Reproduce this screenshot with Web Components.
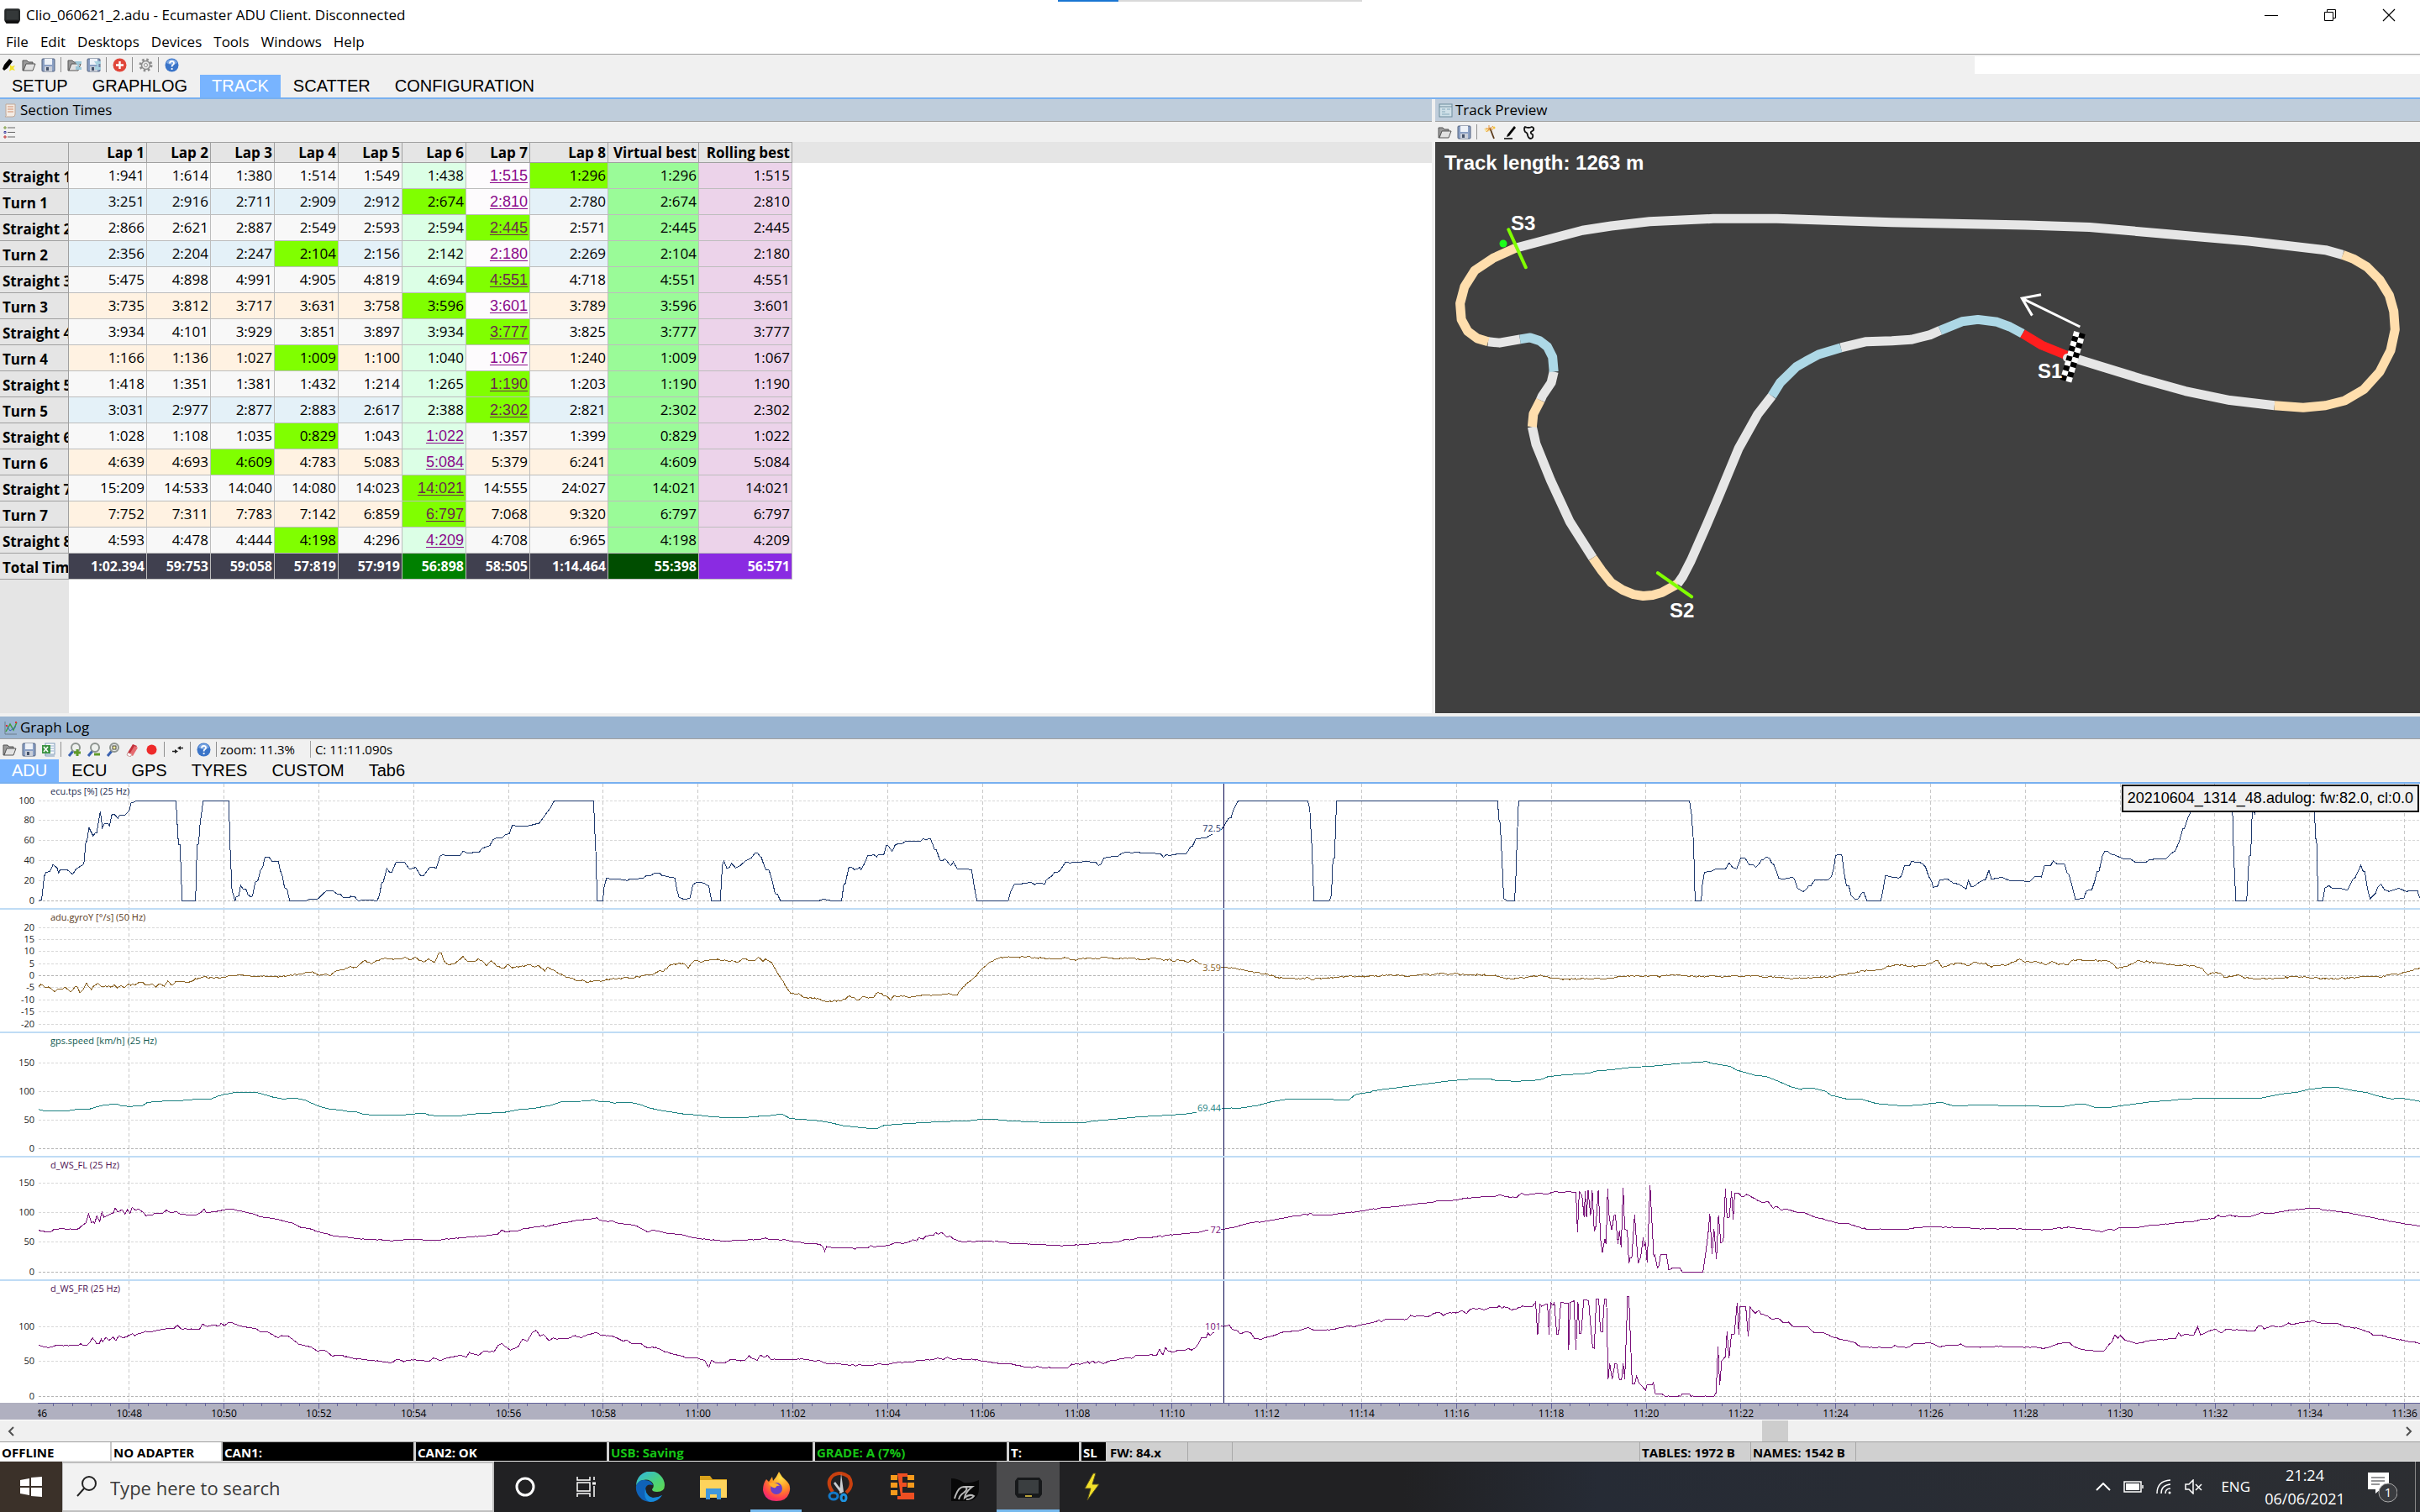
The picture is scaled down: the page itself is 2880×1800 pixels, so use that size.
<!DOCTYPE html>
<html lang="en">
<head>
<meta charset="utf-8">
<title>Clio_060621_2.adu - Ecumaster ADU Client. Disconnected</title>
<style>
    html, body {
        margin: 0;
        height: 100%;
        background: #f0f0f0;
    }
    body {
        --ui: "Open Sans", "Noto Sans", sans-serif;
        --alt: "Liberation Sans", Arial, sans-serif;
        font: 16px/20px var(--ui);
        color: #000;
        overflow: hidden;
    }
</style>
</head>
<body>
<adu-client></adu-client>

<script>
const FOLDER = '<path d="M1 3h5l2 2h5v3H5l-3 7H1z" fill="#9a9a9a" stroke="#555"/><path d="M5 7h11l-3 8H2z" fill="#e2e2e2" stroke="#555"/>';
const FLOPPY = '<rect x="1" y="1" width="15" height="15" rx="1" fill="#8ba0c4" stroke="#52627f"/><rect x="4" y="1" width="9" height="7" fill="#eef2f8"/><rect x="4" y="10" width="9" height="6" fill="#c9ced8"/><rect x="6" y="11" width="3" height="4" fill="#46536b"/>';
const LENS = '<path d="M7 10l-5 6" stroke="#3a62b0" stroke-width="3"/><circle cx="10" cy="6" r="5" fill="#eef1ee" stroke="#8d9490" stroke-width="2"/>';

const ICONS = {
    app: '<rect x="1" y="2" width="16" height="13" rx="2" fill="#26292a"/><path d="M1 14l2 3h12l2-3z" fill="#111"/><rect x="3" y="4" width="12" height="9" fill="#343839"/>',
    plug: '<path d="M8 1l4 3-6 8-4 3-2-2 2-5z" fill="#000"/><path d="M9 8l2 2 4-1-2 3 2 3-4-1-3 2 1-4z" fill="#f2e22c"/>',
    open: FOLDER,
    save: FLOPPY,
    openLink: FOLDER + '<path d="M9 4h8v3h-3v4h3v3h-7v-4h3z" fill="#9cc7d8"/>',
    saveLink: FLOPPY + '<path d="M9 4h8v3h-3v4h3v3h-7v-4h3z" fill="#a9d2e0"/>',
    add: '<circle cx="8.500" cy="8.500" r="8" fill="#e0463a"/><path d="M8.500 4v9M4 8.500h9" stroke="#fff" stroke-width="2.400"/>',
    gear: '<circle cx="8.500" cy="8.500" r="6.500" fill="none" stroke="#8c8c8c" stroke-width="3" stroke-dasharray="2.500 2.600"/><circle cx="8.500" cy="8.500" r="5" fill="#e8e8e8" stroke="#8c8c8c" stroke-width="1.500"/><circle cx="8.500" cy="8.500" r="2" fill="#f6f6f6" stroke="#8c8c8c"/>',
    help: '<circle cx="8.500" cy="8.500" r="8" fill="#3a74c8"/><path d="M2 6a7 7 0 0 1 13 0q-6 4-13 0" fill="#7ba6e2"/><path d="M6 6.500q0-2.500 2.600-2.500T11 6.300q0 1.300-1.300 2T8.600 10.500M8.600 12v2" fill="none" stroke="#fff" stroke-width="1.800"/>',
    excel: '<rect x="5" y="1" width="11" height="13" fill="#fff" stroke="#7a98b8"/><path d="M8 4h7M8 7h7M8 10h7" stroke="#8aa9cc"/><rect x="1" y="3" width="10" height="10" fill="#3d9444"/><path d="M3 5l5 6M8 5l-5 6" stroke="#fff" stroke-width="1.500"/><path d="M5 14v2h11" stroke="#7a98b8" fill="none"/>',
    zoomIn: LENS + '<path d="M12 8v8M8 12h8" stroke="#5f9a28" stroke-width="3"/>',
    zoomOut: LENS + '<path d="M9 14h7" stroke="#5f9a28" stroke-width="3"/>',
    zoomFit: LENS + '<rect x="8" y="4" width="4" height="4" fill="#f6ef9a" stroke="#444"/>',
    eraser: '<path d="M9 2l5 2-6 10-5-2z" fill="#c2303a"/><path d="M11 4l4 2-6 10-4-2z" fill="#e66b70"/><path d="M3 12l5 2-2 3-4-2z" fill="#fff" stroke="#c99"/>',
    record: '<circle cx="8.500" cy="8.500" r="6" fill="#ee2a2a"/>',
    snap: '<path d="M2 10.500h4M11 6.500h4" stroke="#222" stroke-width="1.500"/><path d="M5 8l4 2.500L5 13zM12 4v5L8 6.500z" fill="#222"/>',
    list: '<path d="M6 3h9M6 8.500h9M6 14h9" stroke="#666"/><path d="M2 2h2v2H2z" fill="none" stroke="#7a9a3a"/><path d="M2 7.500h2v2H2z" fill="none" stroke="#3c3c9c"/><path d="M2 13h2v2H2z" fill="none" stroke="#c03030"/>',
    report: '<path d="M3 1h11v12q0 3-3 3H2q2-1 1-4z" fill="#f4ece4" stroke="#c0a898"/><path d="M5 4h7M5 7h7M5 10h7" stroke="#d08a6a"/>',
    pane: '<rect x="1" y="1" width="15" height="15" fill="#cfe0e8" stroke="#6d8b9c"/><path d="M1 4h15" stroke="#6d8b9c"/><path d="M4 7h4M4 10h4M10 7h4M4 13h9" stroke="#86a9bb"/>',
    chart: '<path d="M2 1v15h14" stroke="#6c7c8c" fill="none"/><path d="M3 13l5-9 4 7 4-9" stroke="#3f9c3f" fill="none" stroke-width="1.500"/><path d="M3 5l5 7 7-5" stroke="#3a62c0" fill="none"/><path d="M3 5h2v2H3zM14 1h2v2h-2z" fill="#d33"/>',
    wand: '<path d="M1 4l7-1 1 4-6 1z" fill="#f6e3a0"/><path d="M8 3l5 13" stroke="#5a3a1a" stroke-width="1.800"/><path d="M7 0v6M3 4l9 1M12 1L4 8" stroke="#e8953c"/><circle cx="13" cy="3" r="1.500" fill="#f2c23c"/>',
    pen: '<path d="M14 1l2 2-8 10-3 1 1-3z" fill="#000"/><path d="M2 16h10" stroke="#000" stroke-width="1.500"/>',
    circuit: '<path d="M4 2q4 2 8 0 3 1 2 4l-3 2q-1 2 2 3 1 4-2 5-3 0-4-4 0-3-3-4-2-4 0-6z" fill="none" stroke="#111" stroke-width="1.800" stroke-linejoin="round"/>'
};

// Adds an open shadow root holding the given styles and markup.
function paint(el, css, html) {
    el.attachShadow({ mode: 'open' }).innerHTML = `<style>${css}</style>${html}`;
    return el.shadowRoot;
}

class UiIcon extends HTMLElement {
    connectedCallback() {
        paint(this, `
            :host { display: inline-block; width: 17px; height: 17px; flex: none; }
            svg { display: block; width: 100%; height: 100%; }
        `, `<svg viewBox="0 0 17 17" aria-hidden="true">${ICONS[this.getAttribute('name')] || ''}</svg>`);
    }
}
customElements.define('ui-icon', UiIcon);

class TitleBar extends HTMLElement {
    connectedCallback() {
        paint(this, `
            :host { display: flex; align-items: center; height: 36px; background: #fff; font-size: 17px; position: relative; }
            ui-icon { width: 26px; height: 20px; margin: 0 4px 0 1px; }
            .text { flex: 1; }
            .grip { position: absolute; top: 0; left: 50%; transform: translateX(-50%); width: 362px; height: 2px; background: linear-gradient(90deg, #1976d2 72px, #d9d9d9 72px); }
            button { width: 70px; height: 34px; border: 0; padding: 0; background: none; display: grid; place-items: center; }
            button:last-child { margin-right: 2px; }
        `, `
            <span class="grip"></span>
            <ui-icon name="app"></ui-icon>
            <span class="text"><slot></slot></span>
            <button aria-label="Minimize"><svg width="16" height="16"><path d="M0 8.500h16" stroke="#000"/></svg></button>
            <button aria-label="Restore"><svg width="16" height="16" fill="none" stroke="#000"><path d="M1.500 4.500h10v10h-10zM4.500 4v-2.500h10v10H12"/></svg></button>
            <button aria-label="Close"><svg width="16" height="16"><path d="M1 1l14 14M15 1L1 15" stroke="#000" stroke-width="1.200"/></svg></button>
        `);
    }
}
customElements.define('title-bar', TitleBar);

class MenuBar extends HTMLElement {
    connectedCallback() {
        const items = this.getAttribute('items').split(',');
        paint(this, `
            :host { display: flex; height: 28px; background: #fff; }
            button { border: 0; background: none; font: 17px/28px var(--ui); padding: 0 7px; color: #000; }
        `, items.map(t => `<button>${t}</button>`).join(''));
    }
}
customElements.define('menu-bar', MenuBar);

// Icons are a comma list, "|" draws a separator. Slotted text follows them.
class ToolBar extends HTMLElement {
    connectedCallback() {
        const icons = this.getAttribute('icons').split(',');
        paint(this, `
            :host { display: flex; align-items: center; height: 24px; background: #f0f0f0; }
            button { width: 23px; height: 22px; border: 0; padding: 0; background: none; display: grid; place-items: center; }
            i { width: 1px; height: 18px; margin: 0 4px 0 3px; background: #8f8f8f; }
        `, icons.map(n => n === '|' ? '<i></i>' : `<button aria-label="${n}"><ui-icon name="${n}"></ui-icon></button>`).join('') + '<slot></slot>');
    }
}
customElements.define('tool-bar', ToolBar);

class TabStrip extends HTMLElement {
    connectedCallback() {
        const active = this.getAttribute('active');
        const tabs = this.getAttribute('tabs').split(',');
        paint(this, `
            :host { display: flex; gap: 1px; height: 27px; border-bottom: 2px solid #78b0f0; background: #f0f0f0; }
            button { border: 0; background: none; font: 20px/24px var(--alt); padding: 0 14px 2px; color: #000; }
            button[aria-selected=true] { background: #78b4ff; color: #fff; }
        `, tabs.map(t => `<button role="tab" aria-selected="${t === active}">${t}</button>`).join(''));
    }
}
customElements.define('tab-strip', TabStrip);

class DockPanel extends HTMLElement {
    connectedCallback() {
        paint(this, `
            :host { display: flex; flex-direction: column; min-width: 0; min-height: 0; }
            header { display: flex; align-items: center; gap: 3px; height: 26px; padding-left: 4px; background: var(--caption, #bfcddb); border-bottom: 1px solid #a0a0a0; font-size: 17px; }
        `, `
            <header><ui-icon name="${this.getAttribute('icon')}"></ui-icon><span>${this.getAttribute('caption')}</span></header>
            <slot></slot>
        `);
    }
}
customElements.define('dock-panel', DockPanel);

// "*" marks the best time of a section, "_" the laps the rolling best is made of.
const SECTIONS = [
    ['Straight 1', 's', '1:941 1:614 1:380 1:514 1:549 1:438 1:515_ 1:296* 1:296 1:515'],
    ['Turn 1', 'b', '3:251 2:916 2:711 2:909 2:912 2:674* 2:810_ 2:780 2:674 2:810'],
    ['Straight 2', 's', '2:866 2:621 2:887 2:549 2:593 2:594 2:445*_ 2:571 2:445 2:445'],
    ['Turn 2', 'b', '2:356 2:204 2:247 2:104* 2:156 2:142 2:180_ 2:269 2:104 2:180'],
    ['Straight 3', 's', '5:475 4:898 4:991 4:905 4:819 4:694 4:551*_ 4:718 4:551 4:551'],
    ['Turn 3', 'p', '3:735 3:812 3:717 3:631 3:758 3:596* 3:601_ 3:789 3:596 3:601'],
    ['Straight 4', 's', '3:934 4:101 3:929 3:851 3:897 3:934 3:777*_ 3:825 3:777 3:777'],
    ['Turn 4', 'p', '1:166 1:136 1:027 1:009* 1:100 1:040 1:067_ 1:240 1:009 1:067'],
    ['Straight 5', 's', '1:418 1:351 1:381 1:432 1:214 1:265 1:190*_ 1:203 1:190 1:190'],
    ['Turn 5', 'b', '3:031 2:977 2:877 2:883 2:617 2:388 2:302*_ 2:821 2:302 2:302'],
    ['Straight 6', 's', '1:028 1:108 1:035 0:829* 1:043 1:022_ 1:357 1:399 0:829 1:022'],
    ['Turn 6', 'p', '4:639 4:693 4:609* 4:783 5:083 5:084_ 5:379 6:241 4:609 5:084'],
    ['Straight 7', 's', '15:209 14:533 14:040 14:080 14:023 14:021*_ 14:555 24:027 14:021 14:021'],
    ['Turn 7', 'p', '7:752 7:311 7:783 7:142 6:859 6:797*_ 7:068 9:320 6:797 6:797'],
    ['Straight 8', 's', '4:593 4:478 4:444 4:198* 4:296 4:209_ 4:708 6:965 4:198 4:209'],
    ['Total Time', 'total', '1:02.394 59:753 59:058 57:819 57:919 56:898 58:505 1:14.464 55:398 56:571']
];
const COLUMNS = ['', 'Lap 1', 'Lap 2', 'Lap 3', 'Lap 4', 'Lap 5', 'Lap 6', 'Lap 7', 'Lap 8', 'Virtual best', 'Rolling best', ''];
const WIDTHS = [82, 93, 76, 76, 76, 76, 76, 76, 93, 108, 111];

class LapTable extends HTMLElement {
    connectedCallback() {
        const cell = (t, i) => {
            const cls = ['c' + (i + 1)];
            if (t.includes('*')) cls.push('best');
            if (t.includes('_')) cls.push('roll');
            return `<td class="${cls.join(' ')}">${t.replace(/[*_]/g, '')}</td>`;
        };
        paint(this, `
            :host { display: block; flex: 1; overflow: hidden; background: linear-gradient(90deg, #e5e5e5 82px, #fff 82px); }
            table { width: 100%; table-layout: fixed; border-collapse: separate; border-spacing: 0; font-size: 17px; line-height: 22px; }
            th, td { box-sizing: border-box; padding: 0 2px; text-align: right; white-space: nowrap; overflow: hidden; border-right: 1px solid #bdbdbd; border-bottom: 1px solid #bdbdbd; }
            thead th { height: 25px; padding: 0 2px; background: #e5e5e5; border-color: #a0a0a0; border-top: 1px solid #a0a0a0; }
            tbody th { height: 31px; background: #e5e5e5; text-align: left; padding: 3px 0 0 3px; border-color: #a0a0a0; }
            thead th:last-child, tbody td:last-child { border: 0; }
            .s td { background: #f8f8f8; }
            .b td { background: #e4f1f8; }
            .p td { background: #fff2e2; }
            td.c6 { background: #dcffe6; }
            td.c9 { background: #9afb98; }
            td.c10 { background: #ecd3ea; }
            td.roll { color: #8b0a8b; background: #fdfbfd; font: 18px/20px var(--alt); text-decoration: underline; text-underline-offset: 2px; }
            td.roll.c6 { background: #dcffe6; }
            td.best { background: #80ff00 !important; }
            td.best.roll { color: #6b2a4b; }
            .total td { background: #40404f; color: #fff; font-weight: 700; font-size: 16px; }
            .total td.c6 { background: #008000; }
            .total td.c9 { background: #004d00; }
            .total td.c10 { background: #8a2be2; }
            tbody tr td:last-child { background: #fff; }
        `, `
            <table>
                <colgroup>${WIDTHS.map(w => `<col style="width:${w}px">`).join('')}<col></colgroup>
                <thead><tr>${COLUMNS.map(c => `<th scope="col">${c}</th>`).join('')}</tr></thead>
                <tbody>${SECTIONS.map(([name, kind, times]) => `<tr class="${kind}"><th scope="row">${name}</th>${times.split(' ').map(cell).join('')}<td></td></tr>`).join('')}</tbody>
            </table>
        `);
    }
}
customElements.define('lap-table', LapTable);

const TRACK = [
    ['#e6e6e6', '1020,658 1070,683 1130,712 1200,743 1270,766 1340,779'],
    ['#e6e6e6', '1447,404 1420,392 1300,370 1170,352 1050,335 950,330 740,323 640,318 560,314 460,314 360,321 300,332 255,343 150,387'],
    ['#ffdead', '1340,779 1385,784 1420,779 1450,767 1480,739 1505,695 1522,642 1529,590 1527,545 1520,505 1505,466 1485,434 1465,415 1447,404'],
    ['#e6e6e6', '107,620 125,623 157,614'],
    ['#ffdead', '150,387 115,412 86,443 70,483 63,525 65,565 75,594 90,612 107,620'],
    ['#e6e6e6', '210,695 206,722 192,755 189,766'],
    ['#add8e6', '157,614 173,610 188,618 200,633 208,658 210,695'],
    ['#e6e6e6', '176,832 182,875 205,965 235,1068 271,1158'],
    ['#ffdead', '189,766 178,800 176,832'],
    ['#e6e6e6', '404,1223 412,1205 425,1165 450,1075 470,1000 500,885 530,800 552,755'],
    ['#ffdead', '271,1158 285,1190 300,1220 318,1238 335,1249 350,1253 365,1251 380,1244 404,1223'],
    ['#e6e6e6', '660,635 700,620 740,618 770,615 800,603 816,592'],
    ['#add8e6', '552,755 565,722 590,683 605,669 625,652 660,635'],
    ['#add8e6', '816,592 850,570 875,565 905,571 925,583 945,600'],
    ['#ff1e1e', '945,600 975,629 1014,654']
];

class TrackMap extends HTMLElement {
    connectedCallback() {
        let flag = '';
        for (let r = 0; r < 10; r++) {
            for (let c = 0; c < 2; c++) {
                flag += `<rect x="${c * 7 - 7}" y="${r * 6}" width="7" height="6" fill="${(r + c) % 2 ? '#000' : '#fff'}"/>`;
            }
        }
        paint(this, `
            :host { display: block; flex: 1; min-height: 0; background: #404040; }
            svg { display: block; width: 100%; height: 100%; }
            polyline, path { fill: none; vector-effect: non-scaling-stroke; }
            .road { stroke-width: 11px; stroke-linejoin: round; }
            .gate { stroke: #80ff00; stroke-width: 4px; stroke-linecap: round; }
            .dir { stroke: #fff; stroke-width: 3px; }
            text { font: bold 24px var(--alt); fill: #fff; }
        `, `
            <svg viewBox="0 0 1172 680" preserveAspectRatio="xMinYMin meet" role="img" aria-label="Track preview">
                <g transform="scale(.759 .4783) translate(-24 -123)">
                    ${TRACK.map(([c, p]) => `<polyline class="road" stroke="${c}" points="${p}"/>`).join('')}
                    <path class="gate" d="M139 341L166 435M373 1196L426 1255"/>
                    <path class="dir" d="M1035 583L944 512M974 503L944 512L960 555"/>
                </g>
                <circle cx="81" cy="121" r="4.500" fill="#1bff1b"/>
                <circle cx="752" cy="257" r="5" fill="#e6e6e6"/>
                <g transform="translate(767 227) rotate(16)">${flag}</g>
                <text x="11" y="33">Track length: 1263 m</text>
                <text x="90" y="105">S3</text>
                <text x="717" y="281">S1</text>
                <text x="279" y="566">S2</text>
            </svg>
        `);
    }
}
customElements.define('track-map', TrackMap);

// Each trace is a list of logged blocks: [x origin, y origin, x pitch, samples].
// Samples are "x,y" pairs, three y units to a pixel; "/" is a gap in the line.
const W1 = 0.61224, W2 = 0.39541, W3 = 0.48469, W4 = 0.53571;
const CHANNELS = [
    {
        name: 'ecu.tps [%] (25 Hz)', ink: '#1a2a4e', color: '#1f3a6e', height: 150, noise: 0,
        ticks: [[100, 20], [80, 43], [60, 67], [40, 91], [20, 115], [0, 139]], value: '72.5', valueY: 53,
        blocks: [
            [0, -93, W1, '75,697 81,694 86,610 89,597 97,592 103,568 111,580 114,598 117,586 130,586 141,602 149,582 163,566 167,486 169,484 173,436 181,465 185,455 188,455 195,378 199,437 203,422 210,421 213,429 217,391 222,387 229,403 232,393 244,390 251,375 255,348 265,341 342,341 347,495 350,497 354,697 380,697 383,497 386,495 389,420 395,341 445,341 447,495 451,660 457,697 459,683 464,680 468,641 472,655 478,656 482,675 488,684 491,680 496,630 501,626 506,590 511,575 515,541 523,541 529,556 541,556 545,590 549,610 553,650 558,655 563,697 595,697 600,692 618,690 630,668 636,661 648,662 656,674 662,674 667,686 679,686 682,681 690,683 696,697 712,694 733,697 737,680 742,633 745,630 752,582 758,597 762,594 770,559 787,561 796,584 808,578 818,608 824,606 836,576 848,580 851,565 855,538 861,532 866,536 895,534 900,519 907,526 931,524 937,510 952,500 958,480 966,472 976,472 982,462 990,457 996,427 1004,430 1026,430 1048,420 1060,390 1070,365 1077,341 1154,341 1156,440 1158,520 1161,697 1172,697 1174,650 1179,617 1190,619 1215,622 1219,626 1223,620 1249,617 1256,608 1265,607 1272,599 1282,598 1286,606 1300,612 1312,616 1316,660 1320,685 1330,692 1341,688 1347,640 1354,630 1368,634 1378,645 1383,697 1400,697 1402,640 1404,570 1407,554 1413,581 1418,578 1422,564 1430,580 1440,570 1448,556 1460,545 1468,526 1473,527 1478,540 1480,542 1484,565 1489,587 1495,588 1500,620 1507,672 1511,673 1517,697 1568,697'],
            [960, -13, W1, '0,457 24,457 30,453 36,452 40,454 48,457 68,457 72,400 75,396 82,338 88,338 93,346 98,344 103,338 106,346 112,325 119,295 126,296 129,291 136,300 140,292 150,292 155,259 159,261 166,281 172,258 178,253 186,253 192,244 222,244 226,235 232,240 237,236 241,236 249,275 252,275 259,312 265,313 269,307 280,332 285,319 293,343 312,343 321,348 325,400 331,457 392,457 396,427 404,397 418,397 422,393 428,395 432,391 438,393 443,400 448,394 463,397 466,382 472,374 476,370 481,357 488,355 493,348 503,319 512,322 522,319 532,320 538,317 562,319 567,331 571,329 577,306 585,301 605,298 614,286 624,283 630,286 640,284 655,286 688,289 693,301 700,292 706,297 712,292 738,288 747,263 750,262 757,235 775,233 786,222 788,220 / 806,203 811,190 820,163 825,160 830,130 839,100 974,100 978,130 980,200 981,220 986,457 1016,457 1020,437 1023,307 1026,305 1030,100 1343,100 1346,170 1348,180 1352,320 1355,450 1358,452 1361,457 1376,457 1378,400 1381,230 1384,100 1568,100'],
            [1920, -13, W1, '0,100 148,100 152,150 156,250 159,457 171,457 173,400 177,355 190,352 199,344 218,343 225,322 232,338 240,343 248,304 256,304 264,328 271,328 277,337 283,326 288,311 292,310 297,301 303,304 308,323 312,328 322,377 330,380 348,373 352,379 358,412 369,425 376,414 380,403 384,403 392,382 418,382 424,370 428,345 432,297 436,292 444,293 449,360 453,402 458,404 462,438 470,452 476,450 484,427 487,428 493,457 520,457 524,420 529,367 543,373 555,376 560,368 566,332 576,331 579,317 596,320 602,326 607,337 613,370 618,385 622,409 630,406 635,382 650,380 660,393 672,398 680,408 686,415 690,385 696,407 702,404 712,390 724,380 730,348 735,380 755,373 770,385 810,388 820,370 832,372 838,332 850,332 855,314 862,325 877,325 882,358 886,364 891,400 898,451 914,449 920,421 930,418 936,385 940,354 944,351 951,295 955,280 962,281 966,290 975,294 990,306 1006,308 1014,319 1036,319 1042,310 1075,306 1084,288 1092,280 1100,245 1107,200 1110,198 1117,160 1122,140 1130,110 1140,100 1203,100 1206,300 1210,457 1231,457 1236,297 1239,294 1242,130 1247,146 1250,110 1258,100 1358,100 1363,140 1365,235 1367,239 1370,457 1379,457 1383,412 1391,403 1398,414 1412,412 1427,419 1438,379 1442,374 1453,331 1457,350 1461,354 1465,405 1471,451 1476,440 1482,430 1486,408 1492,397 1499,418 1508,424 1527,412 1542,425 1548,420 1563,420 1567,446']
        ]
    },
    {
        name: 'adu.gyroY [°/s] (50 Hz)', ink: '#5a3a1a', color: '#8b6426', height: 147, noise: 1,
        ticks: [[20, 21], [15, 35], [10, 49], [5, 64], [0, 78], [-5, 92], [-10, 107], [-15, 121], [-20, 136]], value: '3.59', valueY: 69,
        blocks: [
            [0, -243, W1, '75,1005 79,996 84,1000 88,1008 94,1005 99,1010 107,1022 112,1013 122,1011 126,1005 132,1014 137,1022 146,1003 150,1003 155,1025 162,1013 168,990 172,1003 178,1015 182,1001 191,992 197,1003 205,1001 215,1005 222,997 228,1008 236,1001 242,1008 250,995 262,998 274,988 285,998 296,993 303,1005 312,993 319,1003 326,984 333,998 345,984 360,988 372,985 380,975 396,968 404,973 430,972 447,965 460,963 470,961 482,964 492,968 510,967 530,969 548,968 565,962 580,960 600,952 610,954 618,962 635,960 642,966 650,951 662,942 668,944 678,934 694,934 702,920 710,910 722,923 733,910 745,904 758,906 782,903 788,898 797,908 806,898 815,910 824,916 834,904 844,918 848,905 853,883 858,883 862,908 871,925 885,920 893,908 900,895 908,912 920,915 930,904 937,912 946,930 954,911 965,930 978,938 988,925 996,937 1015,930 1027,924 1040,934 1048,930 1059,948 1064,935 1075,944 1084,955 1092,960 1100,970 1112,973 1120,982 1132,980 1144,988 1155,983 1172,983 1190,975 1230,973 1250,965 1270,960 1280,948 1290,948 1300,930 1320,920 1327,921 1338,938 1350,910 1360,915 1375,912 1395,905 1402,910 1425,912 1432,918 1444,903 1456,912 1468,910 1474,898 1483,914 1488,905 1500,918 1515,965 1530,1010 1537,1028 1553,1028 1562,1042 1568,1042'],
            [960, -163, W1, '0,804 8,803 22,806 35,815 45,815 68,815 80,799 92,803 98,812 105,806 112,800 120,805 130,803 135,788 145,787 150,797 155,797 163,812 170,796 190,797 200,803 222,796 245,793 268,790 293,793 300,775 311,752 330,725 342,697 355,678 370,665 385,657 400,660 410,658 425,659 430,656 440,661 460,660 485,664 505,661 520,668 545,661 565,665 582,658 600,665 630,662 655,667 675,662 695,670 705,665 715,675 722,668 740,677 752,668 760,676 768,684 / 806,694 815,694 822,697 830,699 840,703 860,710 890,718 915,730 940,733 950,736 960,737 972,730 978,735 982,740 990,733 1000,736 1020,731 1050,727 1090,727 1140,724 1175,725 1200,718 1212,725 1222,719 1237,714 1245,720 1262,717 1290,722 1310,722 1335,724 1345,728 1360,736 1380,735 1410,728 1430,725 1450,735 1490,737 1530,735 1568,733'],
            [1920, -163, W1, '0,734 15,728 35,724 60,727 85,725 90,730 100,724 130,723 140,726 200,728 280,725 290,730 330,731 343,735 365,733 400,731 430,727 450,722 458,715 485,707 520,703 535,690 545,688 560,686 575,692 600,690 620,680 630,669 640,695 655,684 675,680 688,690 700,676 712,682 724,680 735,694 745,688 765,686 775,675 790,666 800,676 820,674 832,678 840,685 852,674 865,686 875,680 883,687 890,672 902,668 925,672 945,671 965,675 978,697 1000,690 1018,672 1040,675 1060,678 1075,684 1105,688 1130,690 1145,698 1155,720 1165,714 1180,716 1188,731 1215,722 1230,732 1250,736 1290,734 1320,728 1350,730 1390,736 1430,733 1460,728 1490,730 1510,721 1530,717 1550,706 1568,697']
        ]
    },
    {
        name: 'gps.speed [km/h] (25 Hz)', ink: '#0f5a50', color: '#1d8282', height: 148, noise: 0,
        ticks: [[150, 35], [100, 69], [50, 103], [0, 137]], value: '69.44', valueY: 89,
        blocks: [
            [0, 30, W1, '75,182 85,187 112,188 125,189 148,182 172,182 190,172 205,166 228,163 233,168 250,172 277,169 285,159 300,154 350,151 380,146 410,145 425,134 437,128 460,121 498,121 515,130 530,138 550,145 575,142 595,150 605,159 620,171 640,181 660,184 680,191 692,191 705,199 730,203 785,202 800,199 825,196 835,203 860,206 895,205 915,199 945,196 980,193 1010,182 1035,179 1070,168 1090,156 1130,153 1155,149 1165,154 1180,154 1195,160 1205,157 1225,157 1245,165 1260,176 1285,186 1310,193 1330,199 1355,202 1380,208 1405,211 1450,211 1480,206 1505,203 1515,199 1520,199 1535,214 1550,217'],
            [900, 30, W2, '130,217 190,223 225,230 260,240 330,249 365,250 385,239 430,235 480,231 560,226 640,223 680,217 720,218 760,223 850,228 985,230 1010,224 1080,217 1150,209 1210,205 1290,199 1324,193 / 1402,179 1430,177'],
            [1400, 70, W3, '135,57 155,58 200,48 230,36 270,26 330,25 385,27 425,27 435,14 445,7 478,0'],
            [960, -310, W1, '1097,1138 1115,1132 1150,1124 1200,1112 1250,1100 1285,1095 1330,1094 1340,1099 1380,1102 1425,1097 1440,1086 1460,1081 1520,1073 1535,1065 1568,1060'],
            [1920, -310, W1, '0,1060 30,1053 80,1047 130,1038 175,1032 180,1030 190,1037 228,1049 240,1062 275,1080 298,1085 320,1101 345,1121 365,1131 370,1126 390,1127 413,1138'],
            [2040, -10, W4, '248,238 260,252 300,267 310,265 325,265 360,281 420,290 460,286 480,281 505,277 530,289 600,287 700,290 770,293 800,285 825,284 845,295 880,295 910,288 975,274 1005,272 1035,266 1075,263 1190,263 1215,262 1260,247 1295,241 1320,231 1360,223 1385,224 1420,235 1450,242 1470,253 1505,265 1525,262 1555,269 1568,274']
        ]
    },
    {
        name: 'd_WS_FL (25 Hz)', ink: '#4e1152', color: '#7a127a', height: 147, noise: 0.4,
        ticks: [[150, 30], [100, 65], [50, 100], [0, 136]], value: '72', valueY: 86,
        blocks: [
            [0, -118, W1, '75,614 92,620 100,618 106,609 112,611 118,606 130,609 150,610 158,600 167,588 172,556 178,588 181,583 184,590 188,562 194,582 198,548 202,568 210,560 220,553 224,534 229,548 237,540 243,556 248,540 253,553 257,532 262,540 270,538 278,550 284,562 290,559 295,561 300,553 316,554 323,542 332,552 343,547 352,558 383,558 390,551 397,538 401,551 418,547 438,540 450,538 465,544 480,550 496,557 505,566 530,572 548,579 570,589 585,604 605,610 620,620 640,629 650,635 670,637 700,645 730,647 765,651 790,646 840,650 870,645 900,640 940,634 968,627 975,614 985,620 1005,616 1020,608 1050,600 1056,597 1060,602 1080,592 1110,583 1130,576 1150,573 1160,569 1165,576 1182,584 1188,579 1200,588 1235,597 1260,620 1270,613 1300,625 1325,629 1345,640 1380,648 1410,652 1440,650 1475,646 1488,641 1495,646 1530,649 1545,655 1568,661'],
            [900, -118, W2, '152,661 190,663 200,672 206,688 212,672 230,677 240,675 290,677 297,681 305,675 335,677 345,668 352,672 400,667 420,657 440,662 460,655 472,647 482,652 490,640 502,645 512,634 535,630 540,622 548,628 558,622 575,638 583,634 595,646 620,655 690,653 750,656 770,661 850,665 920,670 990,664 1040,659 1090,655 1110,647 1130,647 1150,641 1200,638 1215,632 1222,638 1230,632 1280,627 1310,623 1340,620 1355,613 1362,616'],
            [1400, -78, W3, '/ 110,491 118,490 150,480 180,468 195,464 205,466 225,460 270,448 300,442 315,436 322,439 330,432 335,440 350,439 375,440 405,433 455,426 480,418 540,409 600,398 630,394 645,388 660,390 690,385 715,378 780,373 795,366 808,374 835,377 848,361 858,369 885,362 910,365 930,355 945,360 965,355 981,358 985,500 989,356 996,370 1001,448 1004,355 1007,448 1011,352 1017,440 1021,352 1026,497 1030,480 1036,350 1042,530 1046,572 1052,525 1055,544 1059,346 1063,450 1069,492 1075,440 1078,441 1084,542 1088,494 1092,555 1097,343 1101,490 1107,494 1111,613 1114,592 1118,594 1125,439 1132,580 1134,611 1140,590 1146,520 1149,550 1152,541 1156,610 1163,334 1172,588 1175,582 1181,628 1185,620 1189,580 1203,580 1209,635 1215,632 1218,628 1236,628 1242,643 1293,643 1300,570 1306,500 1310,436 1315,580 1320,490 1326,598 1331,441 1337,540 1343,530 1348,346 1352,448 1358,447 1363,354 1367,455 1371,361 1380,361 1386,370'],
            [2040, -158, W4, '59,612 65,614 72,606 85,617 105,634 120,632 131,655 138,648 148,661 160,658 180,668 205,674 225,688 240,692 250,698 275,708 300,711 325,725 345,730 415,731 430,730 450,724 475,721 500,723 540,724 560,725 580,728 620,729 645,727 725,732 770,726 790,723 820,730 845,735 862,740 875,731 890,733 900,724 945,723 965,717 1000,712 1030,708 1060,702 1072,700 1080,695 1110,692 1120,680 1130,687 1145,680 1165,685 1190,686 1210,675 1217,669 1225,673 1245,672 1280,662 1310,658 1336,654 1350,660 1375,665 1410,672 1450,685 1480,695 1520,708 1568,718']
        ]
    },
    {
        name: 'd_WS_FR (25 Hz)', ink: '#4e1152', color: '#7a127a', height: 145, noise: 0.5, last: true,
        ticks: [[100, 54], [50, 95], [0, 137]], value: '101', valueY: 54,
        blocks: [
            [0, -265, W1, '75,1023 85,1030 97,1032 110,1024 150,1026 157,1019 165,1026 172,1020 180,998 188,1019 193,1018 197,1003 200,1011 206,997 212,1007 220,995 225,1007 231,991 240,999 257,983 262,990 283,974 290,978 323,965 338,965 345,953 352,966 388,967 394,949 402,958 416,951 425,957 430,946 436,955 445,942 455,947 465,955 490,963 498,965 505,976 520,977 535,993 541,997 548,990 560,992 570,1005 580,1020 605,1031 617,1046 630,1041 645,1062 660,1060 690,1072 720,1078 740,1081 760,1087 773,1074 785,1083 800,1076 835,1081 843,1070 855,1079 870,1070 895,1060 907,1067 912,1050 930,1061 940,1045 960,1048 968,1025 975,1018 985,1032 992,1042 1007,1030 1016,1003 1025,1010 1035,978 1042,971 1050,992 1056,986 1067,1008 1075,998 1082,1003 1105,1000 1118,990 1128,997 1157,979 1168,989 1190,992 1212,1010 1218,1005 1227,1018 1245,1018 1258,1033 1275,1032 1292,1048 1320,1060 1335,1070 1355,1069 1370,1080 1378,1103 1383,1078 1390,1086 1410,1087 1420,1075 1440,1080 1450,1076 1456,1062 1462,1072 1472,1078 1478,1060 1486,1068 1492,1060 1498,1075 1568,1075'],
            [900, -265, W2, '152,1074 165,1080 190,1079 210,1089 245,1090 280,1097 290,1093 300,1099 312,1093 320,1097 350,1096 365,1092 390,1094 420,1087 470,1083 500,1078 535,1075 545,1070 565,1074 575,1067 590,1074 610,1073 665,1076 690,1083 740,1090 770,1092 800,1100 830,1105 845,1100 862,1105 937,1105 950,1092 975,1093 998,1083 1003,1089 1012,1080 1020,1088 1030,1082 1045,1090 1060,1082 1085,1077 1120,1069 1130,1072 1142,1061 1180,1060 1205,1061 1214,1038 1224,1060 1232,1033 1240,1046 1255,1050 1270,1042 1285,1044 1300,1036 1310,1042 1322,1034 1330,1020 1340,997 1354,997 1360,980 1366,990 1377,978'],
            [1400, -225, W3, '/ 110,836 116,838 120,835 130,832 136,846 150,853 157,864 170,856 184,862 192,882 200,880 205,885 215,878 240,869 262,857 300,853 322,841 338,850 375,850 395,844 415,838 428,835 435,839 470,826 490,822 497,813 503,821 512,812 565,812 575,798 585,802 605,798 615,804 635,790 645,786 655,798 670,788 690,788 700,780 712,791 722,775 745,773 755,778 770,770 788,770 792,764 800,772 805,766 818,774 823,778 832,776 850,764 865,768 875,765 882,750 887,868 893,758 897,766 903,760 911,757 915,868 919,752 924,762 928,752 934,866 938,867 944,752 962,755 963,920 967,752 972,749 976,746 981,920 986,750 990,862 994,861 1000,744 1012,745 1022,912 1026,915 1031,739 1037,739 1041,855 1046,858 1051,740 1056,740 1060,1025 1064,970 1070,1027 1077,970 1081,970 1088,1028 1093,1026 1097,970 1101,1025 1108,730 1111,730 1119,1042 1125,1042 1130,1015 1136,1040 1152,1066 1156,1045 1168,1046 1171,1037 1176,1078 1193,1079 1200,1087 1238,1087 1242,1078 1259,1078 1264,1087 1320,1087 1325,1075 1330,910 1334,1048 1339,960 1348,945 1352,856 1357,950 1363,865 1370,864 1377,754 1381,867 1384,766 1398,766 1404,874 1409,769 1420,788'],
            [2040, -305, W4, '90,1032 100,1021 105,1034 118,1039 128,1052 142,1048 155,1065 165,1062 175,1077 208,1079 222,1099 240,1099 265,1116 290,1126 310,1134 325,1149 345,1153 395,1153 402,1144 410,1152 432,1151 445,1138 485,1138 500,1150 520,1144 540,1146 548,1140 558,1149 580,1152 640,1149 700,1152 715,1151 730,1157 745,1150 765,1138 790,1136 800,1150 820,1160 850,1165 867,1164 878,1140 883,1135 890,1108 897,1120 902,1109 912,1125 928,1133 940,1139 970,1127 1025,1121 1032,1100 1038,1112 1045,1105 1065,1109 1074,1079 1080,1107 1090,1101 1112,1087 1128,1100 1138,1087 1200,1094 1208,1077 1216,1075 1222,1086 1238,1076 1262,1077 1276,1065 1285,1070 1300,1065 1330,1057 1340,1063 1355,1067 1385,1067 1400,1078 1430,1084 1455,1098 1465,1110 1480,1108 1510,1121 1568,1138']
        ]
    }
];

const SPAN = 2880;       // plot units across the window
const FIRST = 153.7;     // 10:48
const STEP = 112.83;     // two seconds
const CURSOR = 1456.5;
const pct = x => (x / SPAN * 100).toFixed(3) + '%';

function tracePath(blocks, noise) {
    let seed = 7;
    const jitter = () => {
        seed = (seed * 1103515245 + 12345) % 2147483648;
        return (seed / 2147483648 - 0.5) * 2 * noise;
    };
    let d = '';
    let prev = null;
    for (const [ox, oy, pitch, samples] of blocks) {
        for (const s of samples.split(' ')) {
            if (s === '/') { prev = null; continue; }
            const [sx, sy] = s.split(',').map(Number);
            const x = ox + sx * pitch;
            const y = oy + sy / 3;
            if (!prev) {
                d += `M${x.toFixed(1)} ${y.toFixed(1)}`;
            } else {
                const steps = noise ? Math.floor((x - prev[0]) / 2) : 0;
                for (let i = 1; i < steps; i++) {
                    const t = i / steps;
                    d += `L${(prev[0] + (x - prev[0]) * t).toFixed(1)} ${(prev[1] + (y - prev[1]) * t + jitter()).toFixed(1)}`;
                }
                d += `L${x.toFixed(1)} ${y.toFixed(1)}`;
            }
            prev = [x, y];
        }
    }
    return d;
}

class TracePlot extends HTMLElement {
    connectedCallback() {
        const ch = CHANNELS[this.getAttribute('channel')];
        const inner = ch.last ? ch.height : ch.height - 2;
        let grid = '';
        for (const [v, y] of ch.ticks) {
            grid += `<path class="${v === 0 ? 'zero' : 'row'}" d="M46 ${y}.5H${SPAN}"/>`;
        }
        for (let x = FIRST; x < SPAN; x += STEP) {
            grid += `<path class="col" d="M${x} 0V${inner}"/>`;
        }
        paint(this, `
            :host { display: block; height: ${inner}px; background: #fff; ${ch.last ? '' : 'border-bottom: 2px solid #bfdcf5;'} }
            svg { display: block; }
            path { fill: none; vector-effect: non-scaling-stroke; shape-rendering: crispEdges; }
            .row { stroke: #d8d8d8; stroke-dasharray: 3 2; }
            .zero { stroke: #b4b4b4; stroke-dasharray: 3 2; }
            .col { stroke: #c8c8c8; stroke-dasharray: 4 3; }
            .trace { stroke: ${ch.color}; }
            .cursor { stroke: #0a0a50; }
            text { font: 11px var(--ui); fill: #222; }
        `, `
            <svg width="100%" height="${inner}" role="img" aria-label="${ch.name}">
                <svg width="100%" height="${inner}" viewBox="0 0 ${SPAN} ${inner}" preserveAspectRatio="none">
                    ${grid}
                    <path class="trace" d="${tracePath(ch.blocks, ch.noise)}"/>
                    <path class="cursor" d="M${CURSOR} 0V${inner}"/>
                </svg>
                <text x="60" y="13" style="fill:${ch.ink}">${ch.name}</text>
                ${ch.ticks.map(([v, y]) => `<text x="41" y="${y + 4}" text-anchor="end">${v}</text>`).join('')}
                <text x="${pct(1453)}" y="${ch.valueY + 4}" text-anchor="end" style="fill:${ch.color}">${ch.value}</text>
            </svg>
        `);
    }
}
customElements.define('trace-plot', TracePlot);

class TimeAxis extends HTMLElement {
    connectedCallback() {
        let marks = '';
        let labels = '';
        for (let i = -5; i < 122; i++) {
            marks += `<path d="M${(FIRST + i * STEP / 5).toFixed(1)} 0v${i % 5 ? 4 : 7}"/>`;
        }
        for (let i = -1; i < 25; i++) {
            const s = 648 + i * 2;
            const label = Math.floor(s / 60) + ':' + String(s % 60).padStart(2, '0');
            labels += `<text x="${pct(FIRST + i * STEP)}" y="17" text-anchor="middle">${label}</text>`;
        }
        paint(this, `
            :host { display: block; height: 20px; background: #b0b0c0; }
            svg { display: block; clip-path: inset(0 0 0 45px); }
            path { stroke: #62629a; fill: none; shape-rendering: crispEdges; vector-effect: non-scaling-stroke; }
            text { font: 12px var(--ui); fill: #000; }
        `, `
            <svg width="100%" height="20" role="img" aria-label="Time">
                <svg width="100%" height="20" viewBox="0 0 ${SPAN} 20" preserveAspectRatio="none"><path d="M0 .5H${SPAN}"/>${marks}</svg>
                ${labels}
            </svg>
        `);
    }
}
customElements.define('time-axis', TimeAxis);

class LogScroll extends HTMLElement {
    connectedCallback() {
        paint(this, `
            :host { display: flex; align-items: stretch; height: 25px; background: #f0f0f0; border-top: 1px solid #fff; }
            button { width: 26px; border: 0; padding: 0; background: none; display: grid; place-items: center; }
            .rail { flex: 1; display: grid; grid-template-columns: 2071fr 31fr 726fr; }
            .thumb { grid-column: 2; background: #cdcdcd; }
        `, `
            <button aria-label="Scroll left"><svg width="8" height="12"><path d="M7 1L2 6l5 5" fill="none" stroke="#505050" stroke-width="2"/></svg></button>
            <div class="rail" role="scrollbar" aria-label="Log position" aria-valuenow="73"><span class="thumb"></span></div>
            <button aria-label="Scroll right"><svg width="8" height="12"><path d="M1 1l5 5-5 5" fill="none" stroke="#505050" stroke-width="2"/></svg></button>
        `);
    }
}
customElements.define('log-scroll', LogScroll);

class StatusBar extends HTMLElement {
    connectedCallback() {
        const cells = [
            ['OFFLINE', 133, 'light'], ['NO ADAPTER', 132, 'light'], ['CAN1:', 230, 'dark'], ['CAN2: OK', 230, 'dark'],
            ['USB: Saving', 245, 'dark ok'], ['GRADE: A (7%)', 231, 'dark ok'], ['T:', 86, 'dark'], ['SL', 32, 'dark'],
            ['FW: 84.x', 95, ''], ['', 53, ''], ['', 485, ''], ['TABLES: 1972 B', 132, ''], ['NAMES: 1542 B', 125, '']
        ];
        paint(this, `
            :host { display: flex; height: 22px; border-top: 1px solid #a0a0a0; border-bottom: 1px solid #e8e8e8; background: #d0d0d0; font: bold 15px/24px var(--ui); }
            span { box-sizing: border-box; padding-left: 2px; white-space: nowrap; overflow: hidden; border-right: 1px solid #a8a8a8; flex: none; }
            .light { background: #fff; border-right: 2px solid #c8c8c8; }
            .dark { background: #000; color: #fff; border-right: 3px solid #d0d0d0; }
            .ok { color: #16c416; }
        `, cells.map(([t, w, c]) => `<span class="${c}" style="width:${w}px">${t}</span>`).join(''));
    }
}
customElements.define('status-bar', StatusBar);

const APPS = [
    ['Microsoft Edge', 'first', '<defs><linearGradient id="e" x1="0" y1="0" x2="1" y2="1"><stop offset="0" stop-color="#2fb5e8"/><stop offset=".6" stop-color="#4bd27a"/><stop offset="1" stop-color="#62d84a"/></linearGradient></defs><path d="M1 17A17 17 0 0 1 35 16q0 8-9 8-6 0-6-3 3-3 1-7-4-6-12-4-6 2-8 7z" fill="url(#e)"/><path d="M1 17q3-8 10-7 8 0 10 6-8-2-9 5 0 9 9 10 5 1 11-3-5 8-14 8A17 17 0 0 1 1 17z" fill="#0f62b8"/><path d="M12 20q1 9 9 11 6 0 11-3-6 8-14 8-9-2-6-16z" fill="#1789d8"/>'],
    ['File Explorer', '', '<path d="M2 5h12l3 4h17v8H2z" fill="#d9a21b"/><path d="M2 10h32v21H2z" fill="#fdd35c"/><path d="M9 20h18v13h-5v-6h-8v6H9z" fill="#3f97dc"/>'],
    ['Firefox', 'run', '<defs><radialGradient id="f" cx=".65" cy=".2" r=".9"><stop offset="0" stop-color="#ffe14a"/><stop offset=".45" stop-color="#ff9022"/><stop offset=".8" stop-color="#ff3a50"/><stop offset="1" stop-color="#e0218a"/></radialGradient></defs><path d="M6 9l3 3 4-6 1 5q4-4 7-11 3 6 8 10 6 5 5 12-2 13-16 13T2 22q0-8 4-13z" fill="url(#f)"/><circle cx="18" cy="20" r="7" fill="#6a3fc8"/><path d="M9 14q8-3 13 3-4-1-5 2-5 1-8-5z" fill="#ffb02e"/>'],
    ['Snipping Tool', '', '<path d="M10 24Q1 12 11 4q9-5 18 2 7 10-3 19" fill="none" stroke="#c8400f" stroke-width="4"/><path d="M20 2l3 22-5 2zM20 26l-9-12 2-2 9 12z" fill="#c9ced2"/><ellipse cx="11" cy="29" rx="5" ry="4" fill="none" stroke="#1479c8" stroke-width="3"/><ellipse cx="23" cy="31" rx="3" ry="4" fill="none" stroke="#1f93e0" stroke-width="3"/>'],
    ['Light Client', '', '<path d="M4 4h8v6H4zM4 13h8v6H4zM4 22h8v6H4zM24 4h8v6h-8zM24 13h8v6h-8z" fill="#f79a1c"/><path d="M12 2h12v4h-6v7h5v5h-5v7h14v8H12v-4h4z" fill="#ee4f22"/>'],
    ['Race Sim', '', '<path d="M1 8q8 0 15 5 8 1 18-3v10q0 13-12 15H1z" fill="#080808"/><path d="M5 32q4-14 11-14 7 1 0 7-5 3-6 8M17 18h9q-8 6-9 13 6-5 11-2-3 4-9 4" fill="none" stroke="#b9b9b9" stroke-width="2"/>'],
    ['ADU Client', 'run active', '<path d="M5 7h26l3 4v16l-3 4H5l-3-4V11z" fill="#17191b"/><rect x="6" y="10" width="24" height="16" fill="#3a3e40"/><path d="M14 28h8v2h-8z" fill="#b8a23a"/>'],
    ['Power Client', '', '<path d="M20 2L10 20h7l-4 14 14-19h-8l4-13z" fill="#f3e02a" stroke="#57501c"/>']
];

class TaskBar extends HTMLElement {
    connectedCallback() {
        paint(this, `
            :host { display: flex; height: 60px; color: #fff; background: linear-gradient(90deg, #212123 0, #212123 58%, #262b35 66%, #2c2e32 100%); }
            button { position: relative; border: 0; padding: 0; background: none; width: 75px; display: grid; place-items: center; flex: none; color: inherit; }
            .start { width: 74px; background: #3b3129; }
            .sys { width: 73px; }
            .first { margin-left: 2px; }
            .search { display: flex; align-items: center; width: 514px; box-sizing: border-box; padding-left: 15px; gap: 15px; background: #f2f2f2; border: 2px solid #bfbfbf; border-left: 1px solid #bfbfbf; }
            input { flex: 1; min-width: 0; border: 0; padding: 2px 0 0; outline: 0; background: none; font: 22px/30px var(--ui); }
            input::placeholder { color: #3a3a3a; opacity: 1; }
            .active { background: #4b4b4d; }
            .run::after { content: ""; position: absolute; bottom: 0; left: 7px; right: 7px; height: 3px; background: #76b9ed; }
            .active::after { left: 0; right: 0; }
            .tray { margin-left: auto; display: flex; align-items: center; }
            .tray button { width: 36px; height: 60px; }
            .lang { font-size: 17px; padding: 0 14px; }
            .clock { width: 102px; text-align: center; font-size: 18px; line-height: 28px; }
            .tray .note { width: 80px; }
            .edge { width: 5px; height: 60px; border-left: 1px solid #888; }
            .note text { font: 15px var(--ui); fill: #fff; }
        `, `
            <button class="start" aria-label="Start"><svg width="26" height="24"><path d="M0 4l11-2v9H0zM13 1l13-1v11H13zM0 13h11v9L0 20zM13 13h13v11l-13-1z" fill="#fff"/></svg></button>
            <label class="search">
                <svg width="26" height="26" aria-hidden="true"><circle cx="16" cy="9" r="8" fill="none" stroke="#222" stroke-width="2"/><path d="M10 15L2 24" stroke="#222" stroke-width="2"/></svg>
                <input type="search" placeholder="Type here to search" aria-label="Search">
            </label>
            <button class="sys" aria-label="Cortana"><svg width="24" height="24"><circle cx="12" cy="12" r="10" fill="none" stroke="#fff" stroke-width="3"/></svg></button>
            <button class="sys" aria-label="Task View"><svg width="26" height="24" fill="none" stroke="#fff" stroke-width="1.500"><path d="M2 0v4h15V0M2 24v-4h15v4M2 7h15v10H2zM22 0v4M22 11v13"/><path d="M20 8h4" stroke-width="3"/></svg></button>
            ${APPS.map(([name, cls, art]) => `<button class="${cls}" aria-label="${name}"><svg width="36" height="36" viewBox="0 0 36 36">${art}</svg></button>`).join('')}
            <div class="tray">
                <button aria-label="Hidden icons"><svg width="18" height="10"><path d="M1 9l8-8 8 8" fill="none" stroke="#fff" stroke-width="2"/></svg></button>
                <button aria-label="Battery"><svg width="24" height="14"><path d="M1 1h20v12H1zM23 5v4" fill="none" stroke="#fff" stroke-width="1.500"/><rect x="3" y="3" width="16" height="8" fill="#fff"/></svg></button>
                <button aria-label="Network"><svg width="20" height="20" fill="none" stroke="#fff" stroke-width="1.500"><path d="M2 18Q2 3 18 2M7 18q0-10 11-11M12 18q0-6 6-6"/><circle cx="17" cy="17" r="1.500" fill="#fff" stroke="none"/></svg></button>
                <button aria-label="Volume"><svg width="22" height="18" fill="none" stroke="#fff" stroke-width="1.500"><path d="M1 6h4l5-5v16l-5-5H1zM13 6l7 7M20 6l-7 7"/></svg></button>
                <span class="lang">ENG</span>
                <div class="clock">21:24<br>06/06/2021</div>
                <button class="note" aria-label="Notifications"><svg width="38" height="40"><path d="M3 3h25v20H18l-6 5v-5H3z" fill="#fff"/><path d="M7 9h16M7 13h16M7 17h10" stroke="#2c2e32"/><circle cx="27" cy="27" r="11" fill="#3a3c40" stroke="#aaa"/><text x="27" y="32" text-anchor="middle">1</text></svg></button>
                <span class="edge"></span>
            </div>
        `);
    }
}
customElements.define('task-bar', TaskBar);

class AduClient extends HTMLElement {
    connectedCallback() {
        paint(this, `
            :host { display: flex; flex-direction: column; height: 100vh; }
            .tools { display: flex; align-items: center; border-top: 1px solid #a0a0a0; background: #f0f0f0; }
            .tools tool-bar { flex: 1; }
            .tools input { width: 530px; height: 21px; box-sizing: border-box; border: 0; padding: 0; background: #fff; }
            .docks { flex: 1; min-height: 0; display: grid; grid-template-columns: 1704fr 1172fr; gap: 4px; margin-bottom: 4px; }
            .log { --caption: #99b4d1; }
            .log span { font-size: 15px; }
            .log span + span { border-left: 1px solid #a0a0a0; margin-left: 18px; padding-left: 5px; }
            .plots { position: relative; }
            .tip { position: absolute; top: 1px; right: 1px; padding: 0 5px; border: 2px solid #000; background: #f0f0f0; font: 18px/29px var(--alt); }
        `, `
            <title-bar>Clio_060621_2.adu - Ecumaster ADU Client. Disconnected</title-bar>
            <menu-bar items="File,Edit,Desktops,Devices,Tools,Windows,Help"></menu-bar>
            <div class="tools">
                <tool-bar icons="plug,open,save,|,openLink,saveLink,|,add,|,gear,|,help"></tool-bar>
                <input type="text" aria-label="Message" readonly>
            </div>
            <tab-strip tabs="SETUP,GRAPHLOG,TRACK,SCATTER,CONFIGURATION" active="TRACK"></tab-strip>
            <div class="docks">
                <dock-panel icon="report" caption="Section Times">
                    <tool-bar icons="list"></tool-bar>
                    <lap-table></lap-table>
                </dock-panel>
                <dock-panel icon="pane" caption="Track Preview">
                    <tool-bar icons="open,save,|,wand,pen,circuit"></tool-bar>
                    <track-map></track-map>
                </dock-panel>
            </div>
            <dock-panel class="log" icon="chart" caption="Graph Log">
                <tool-bar icons="open,save,excel,|,zoomIn,zoomOut,zoomFit,eraser,record,|,snap,|,help,|"><span>zoom: 11.3%</span><span>C: 11:11.090s</span></tool-bar>
                <tab-strip tabs="ADU,ECU,GPS,TYRES,CUSTOM,Tab6" active="ADU"></tab-strip>
                <div class="plots">
                    ${CHANNELS.map((c, i) => `<trace-plot channel="${i}"></trace-plot>`).join('')}
                    <div class="tip">20210604_1314_48.adulog: fw:82.0, cl:0.0</div>
                </div>
                <time-axis></time-axis>
                <log-scroll></log-scroll>
            </dock-panel>
            <status-bar></status-bar>
            <task-bar></task-bar>
        `);
    }
}
customElements.define('adu-client', AduClient);
</script>
</body>
</html>
